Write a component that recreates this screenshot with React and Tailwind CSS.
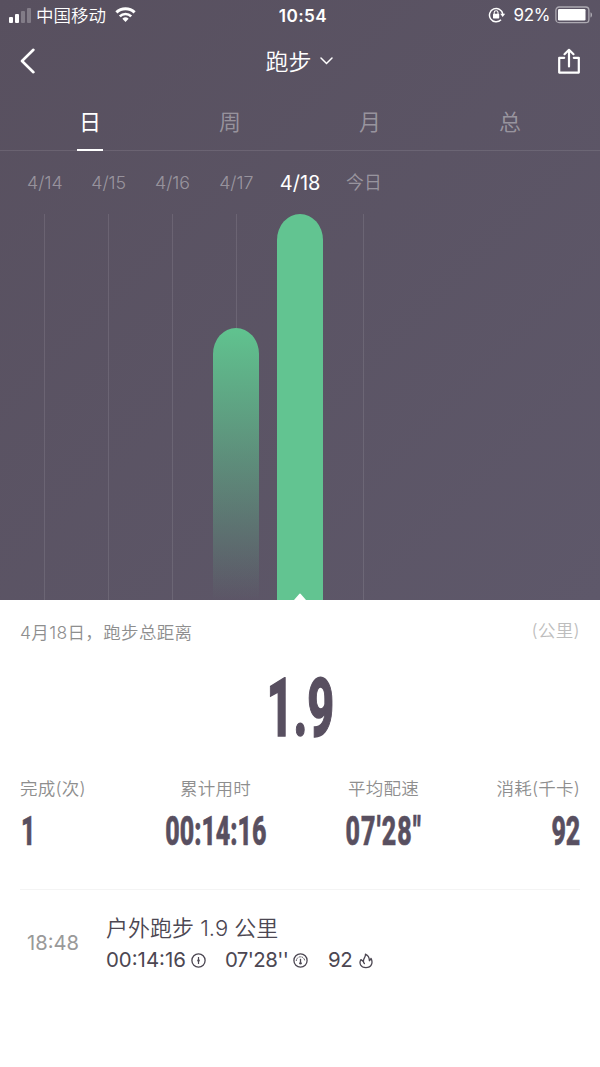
import React, { useState } from 'react';

const tabs = ['日', '周', '月', '总'];

const days = [
  { label: '4/14', height: 0 },
  { label: '4/15', height: 0 },
  { label: '4/16', height: 0 },
  { label: '4/17', height: 272 },
  { label: '4/18', height: 386 },
  { label: '今日', height: 0 },
];

const stats = [
  { label: '完成(次)', value: '1', box: 'w-[110px] items-start', text: 'origin-left ml-px' },
  { label: '累计用时', value: '00:14:16', box: 'w-[171px] items-center', text: 'origin-center' },
  { label: '平均配速', value: '07′28″', box: 'w-[165px] items-center', text: 'origin-center tracking-[1.9px]' },
  { label: '消耗(千卡)', value: '92', box: 'w-[114px] items-end', text: 'origin-right' },
];

const StatusBar = () => (
  <div className="grid grid-cols-3 items-center h-[30px] pl-[9px] pr-[7px] text-[17px]">
    <div className="flex items-center">
      <div className="flex items-end gap-[2px] mr-[5px]">
        <span className="w-1 h-[6px] rounded-[1px] bg-white" />
        <span className="w-1 h-[9px] rounded-[1px] bg-white" />
        <span className="w-1 h-3 rounded-[1px] bg-white/25" />
        <span className="w-1 h-[15px] rounded-[1px] bg-white/25" />
      </div>
      <span className="pt-[2px] text-[17.5px] font-[350]">中国移动</span>
      <svg className="ml-[9px]" width="21" height="16" viewBox="0 0 21 16" fill="none" stroke="white" strokeWidth="3">
        <path d="M1.4 5.4a13 13 0 0 1 18.2 0" />
        <path d="M4.8 9.4a8 8 0 0 1 11.4 0" strokeWidth="2.6" />
        <path d="M7.4 11.8a4.5 4.5 0 0 1 6.2 0L10.5 15z" fill="white" stroke="none" />
      </svg>
    </div>
    <div className="pt-px text-center font-semibold text-[17.2px] tracking-[0.4px] pl-1">10:54</div>
    <div className="flex items-center justify-end">
      <svg className="mr-[9px]" width="18" height="16" viewBox="0 0 18 16" fill="none" stroke="white" strokeWidth="1.5">
        <path d="M13 12.8A6.7 6.7 0 1 1 14.8 7" />
        <path d="M12.2 6.8h5l-2.5 3.2z" fill="white" stroke="none" />
        <rect x="5" y="6.8" width="6.2" height="4.6" rx="0.6" fill="white" stroke="none" />
        <path d="M6.2 7V5.6a1.9 1.9 0 0 1 3.8 0V7" strokeWidth="1.1" />
      </svg>
      <span className="pt-[2px] mr-[5px] -ml-[1px] text-[17px] tracking-[-0.4px]">92%</span>
      <svg width="38" height="18" viewBox="0 0 38 18">
        <rect x="0.9" y="1" width="33" height="15.6" rx="3.2" fill="none" stroke="white" strokeOpacity="0.5" strokeWidth="1.3" />
        <rect x="3" y="3.1" width="27.5" height="11.4" rx="1.2" fill="white" />
        <path d="M35.5 6.2c2 .8 2 4.6 0 5.4z" fill="white" fillOpacity="0.5" />
      </svg>
    </div>
  </div>
);

const NavBar = () => (
  <div className="flex items-center justify-between h-[62px] pl-5 pr-[19px]">
    <svg width="16" height="26" viewBox="0 0 16 26" fill="none" stroke="white" strokeWidth="2.6" strokeLinecap="round" strokeLinejoin="round">
      <path d="M13.4 1.8 2 13l11.4 11.2" />
    </svg>
    <div className="flex items-center pl-[5px]">
      <span className="pt-[2px] text-[23px] font-[350] leading-none">跑步</span>
      <svg className="ml-2" width="13" height="8" viewBox="0 0 13 8" fill="none" stroke="white" strokeWidth="1.5" strokeLinecap="round">
        <path d="M1 1l5.5 5.5L12 1" />
      </svg>
    </div>
    <svg width="24" height="27" viewBox="0 0 24 27" fill="none" stroke="white" strokeWidth="2.2" strokeLinecap="round" strokeLinejoin="round">
      <path d="M7.2 9.8H2.2v14.8h19.6V9.8h-5" />
      <path d="M12 18.5V1.8M7.5 6.2 12 1.8l4.5 4.4" />
    </svg>
  </div>
);

const DayChart = ({ selected, onSelect }) => (
  <div className="flex pl-[13px] h-[449px]">
    {days.map((day) => {
      const active = day.label === selected;
      return (
        <div key={day.label} className="flex flex-col w-[63.8px]" onClick={() => onSelect(day.label)}>
          <div
            className={`flex items-center justify-center h-[63px] whitespace-nowrap ${
              active ? 'pt-px text-[20px] text-white' : 'pt-[2px] text-[17.8px] font-[350] text-white/40'
            }`}
          >
            {day.label}
          </div>
          <div className="relative flex flex-col items-center h-[386px]">
            <div className="w-px grow bg-white/10" />
            {day.height > 0 && (
              <div
                className={`w-[46px] rounded-t-[23px_26px] ${
                  active ? 'bg-[#62c491]' : 'bg-linear-to-b from-[#60c38f] to-[#60c38f]/0'
                }`}
                style={{ height: day.height }}
              />
            )}
            {active && (
              <svg className="absolute bottom-0" width="12" height="7" viewBox="0 0 12 7" fill="white">
                <path d="M0 7 5 1.2Q6-.2 7 1.2L12 7z" />
              </svg>
            )}
          </div>
        </div>
      );
    })}
  </div>
);

const TimeIcon = () => (
  <svg width="15" height="15" viewBox="0 0 15 15" fill="none" stroke="currentColor" strokeWidth="1.3">
    <circle cx="7.5" cy="7.5" r="6.6" />
    <path d="M7.5 4v7" strokeWidth="1.2" />
    <circle cx="7.5" cy="7.5" r="1.2" fill="currentColor" stroke="none" />
  </svg>
);

const PaceIcon = () => (
  <svg width="15" height="15" viewBox="0 0 15 15" fill="none" stroke="currentColor" strokeWidth="1.3">
    <circle cx="7.5" cy="7.5" r="6.6" />
    <path d="M3.3 8a4.2 4.2 0 0 1 8.4 0" strokeWidth="1" strokeDasharray="1.7 0.8" />
    <path d="M7.5 5.8v3.4" />
    <circle cx="7.5" cy="10.3" r="1.3" fill="currentColor" stroke="none" />
  </svg>
);

const FlameIcon = () => (
  <svg width="14" height="16" viewBox="0 0 14 16" fill="none" stroke="currentColor" strokeWidth="1.3" strokeLinejoin="round" strokeLinecap="round">
    <path d="M6.4 1.2C7 4 4.2 5 4.4 8.4L1.9 6.6C-.2 10.2 1.6 14.6 6.9 14.6c5.6 0 7.4-4.8 5.1-9.2-.3 1.2-.8 1.8-1.6 2.3C10.4 4.6 9 2.4 6.4 1.2z" />
    <path d="M4.4 8.4c.1 1 .4 1.6 1 2.1" />
  </svg>
);

const App = () => {
  const [tab, setTab] = useState('日');
  const [selected, setSelected] = useState('4/18');

  return (
    <div className="w-[600px] h-[1067px] overflow-hidden bg-white font-[Inter,'Noto_Sans_CJK_SC',sans-serif]">
      <div className="h-[600px] text-white bg-linear-to-br from-[#58505f] to-[#5e586a]">
        <StatusBar />
        <NavBar />

        {/* Period tabs */}
        <div className="flex h-[59px] px-5 border-b border-white/10">
          {tabs.map((t) => (
            <button
              key={t}
              className={`relative flex items-center justify-center w-[140px] pt-[2px] text-[22px] ${
                t === tab ? 'text-white' : 'font-[350] text-white/40'
              }`}
              onClick={() => setTab(t)}
            >
              {t}
              {t === tab && <span className="absolute -bottom-px w-[26px] h-[2px] bg-white" />}
            </button>
          ))}
        </div>

        <DayChart selected={selected} onSelect={setSelected} />
      </div>

      {/* Day summary */}
      <div className="px-[20px] text-[#584f60]">
        <div className="flex items-center justify-between h-[64px] pt-[2px] text-[17.5px] font-[350]">
          <span className="text-[#8e8e8e] tracking-[0.35px]">4月18日，跑步总距离</span>
          <span className="text-[#bdbdbd] pb-1 tracking-[0.3px]">(公里)</span>
        </div>
        <div className="flex justify-center h-[106px] font-[Roboto,sans-serif] font-extrabold text-[82px] leading-[88px]">
          <span className="scale-x-[0.57] [-webkit-text-stroke:1.5px_#584f60]">1.9</span>
        </div>
        <div className="flex h-[120px] border-b border-[#f4f4f4]">
          {stats.map((s) => (
            <div key={s.label} className={`flex flex-col ${s.box}`}>
              <span className="h-9 pt-px leading-9 text-[17.5px] font-[350] tracking-[0.2px] text-[#8e8e8e] whitespace-nowrap">{s.label}</span>
              <span className={`mt-[5px] scale-x-[0.61] ${s.text} font-[Roboto,sans-serif] font-extrabold text-[41px] leading-[41px] [-webkit-text-stroke:0.7px_#584f60] whitespace-nowrap`}>
                {s.value}
              </span>
            </div>
          ))}
        </div>

        {/* Workout record */}
        <div className="flex items-center h-[107px] text-[#4c4752]">
          <span className="w-[86px] pl-[7px] text-[20.2px] text-[#999]">18:48</span>
          <div className="pt-[2px]">
            <div className="text-[22px] leading-8 font-[350]">户外跑步 1.9 公里</div>
            <div className="flex items-center h-[34px] text-[20.4px]">
              <span className="w-[85px]">00:14:16</span>
              <TimeIcon />
              <span className="ml-[19px] w-[68px] tracking-[-0.6px]">07'28''</span>
              <PaceIcon />
              <span className="ml-5 w-[31px] tracking-[-0.3px]">92</span>
              <FlameIcon />
            </div>
          </div>
        </div>
      </div>
    </div>
  );
};

export default App;
